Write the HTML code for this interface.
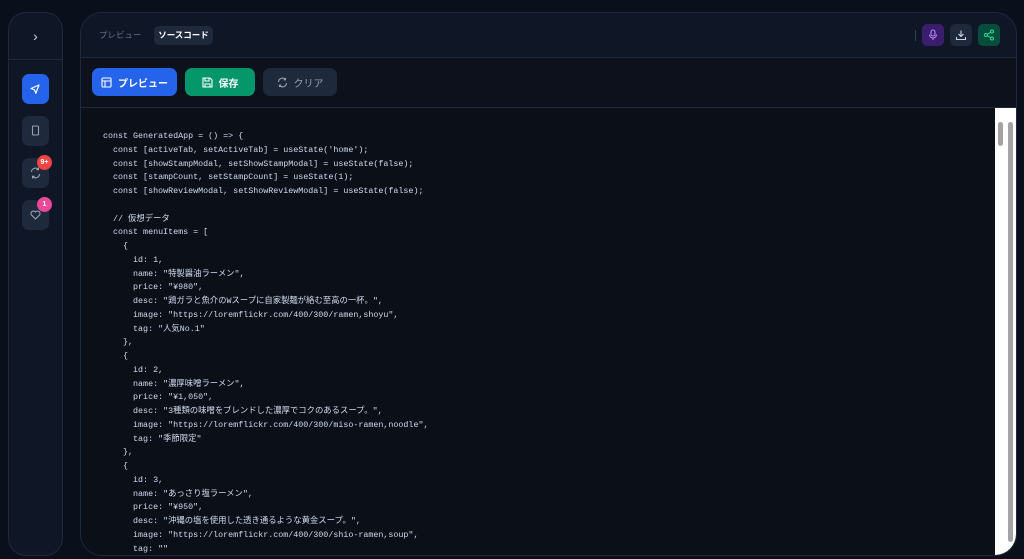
<!DOCTYPE html>
<html><head><meta charset="utf-8"><style>
*{box-sizing:border-box;margin:0;padding:0}
body{width:1024px;height:559px;background:#0a0f1c;font-family:"Liberation Sans","Noto Sans CJK JP",sans-serif;overflow:hidden;position:relative}
.side{position:absolute;left:8px;top:12px;width:55px;height:544px;border-radius:18px;background:#0f1626;border:1px solid #1e293b}
.side .top{height:47px;border-bottom:1px solid #1e293b;color:#cbd5e1;text-align:center;line-height:46px;font-size:14px}
.sb{position:absolute;left:13px;width:27px;height:30px;border-radius:7px;background:#1e293b}
.badge{position:absolute;width:15px;height:15px;border-radius:50%;color:#fff;font-size:7px;font-weight:bold;text-align:center;line-height:15px}
.main{position:absolute;left:80px;top:12px;width:937px;height:544px;border-radius:22px;background:#0f1626;border:1px solid #1e293b;overflow:hidden}
.hdr{height:45px;border-bottom:1px solid #1e293b;position:relative}
.tab{position:absolute;top:13px;font-size:8.5px;height:19px;line-height:19px;padding:0 10px;border-radius:5px}
.tb{position:absolute;top:0;height:50px;left:0;right:0;background:#0c111b;border-bottom:1px solid #1e293b}
.btn{position:absolute;top:10px;height:28px;border-radius:7px;color:#fff;font-size:10px;font-weight:bold;display:flex;align-items:center;justify-content:center;gap:6px}
.ib{position:absolute;top:11px;width:22px;height:22px;border-radius:5px;display:flex;align-items:center;justify-content:center}
.code{position:absolute;top:96px;left:0;right:0;bottom:0;background:#0b0f18}
pre{position:absolute;left:22px;top:22px;font-family:"Liberation Mono","Noto Sans CJK JP",monospace;font-size:8.35px;line-height:13.75px;color:#d0dcef}
.scr{position:absolute;left:914px;top:0;width:22px;bottom:0;background:#fff;border-bottom-right-radius:20px}
</style></head><body>
<div class="side"><div class="top">›</div>
<div class="sb" style="top:61px;background:#2563eb"><svg width="27" height="30" viewBox="0 0 27 30"><path d="M17 11l-8 3.5 3.5 1.3 1.3 3.5z" fill="none" stroke="#fff" stroke-width="1.2" stroke-linejoin="round"/></svg></div>
<div class="sb" style="top:103px"><svg width="27" height="30"><rect x="10.5" y="10" width="6" height="9" rx="1" fill="none" stroke="#94a3b8" stroke-width="1.1"/></svg></div>
<div class="sb" style="top:145px"><svg width="27" height="30"><path d="M9.5 14a4 4 0 0 1 7-2.5M17.5 16a4 4 0 0 1-7 2.5M16.5 9.5v2.2h-2.2M10.5 20.5v-2.2h2.2" fill="none" stroke="#94a3b8" stroke-width="1.1"/></svg></div>
<div class="badge" style="left:28px;top:142px;background:#ef4444">9+</div>
<div class="sb" style="top:187px"><svg width="27" height="30"><path d="M13.5 19l-4-4a2.2 2.2 0 0 1 4-3 2.2 2.2 0 0 1 4 3z" fill="none" stroke="#94a3b8" stroke-width="1.1"/></svg></div>
<div class="badge" style="left:28px;top:184px;background:#ec4899">1</div>
</div>
<div class="main">
<div class="hdr">
<div class="tab" style="left:18px;color:#64748b;padding:0">プレビュー</div>
<div class="tab" style="left:73px;width:59px;padding:0;text-align:center;background:#1e293b;color:#fff;font-weight:bold">ソースコード</div>
<div style="position:absolute;left:834px;top:17px;width:1px;height:11px;background:#334155"></div>
<div class="ib" style="left:841px;background:#3b1d6e"><svg width="12" height="12" viewBox="0 0 12 12" fill="none" stroke="#c084fc" stroke-width="1.1"><rect x="4" y="1" width="4" height="6" rx="2"/><path d="M2.5 5.5a3.5 3.5 0 0 0 7 0M6 9v2"/></svg></div>
<div class="ib" style="left:869px;background:#1e293b"><svg width="12" height="12" viewBox="0 0 12 12" fill="none" stroke="#cbd5e1" stroke-width="1.1"><path d="M6 1.5v6M3.5 5l2.5 2.5L8.5 5M1.5 8v2.5h9V8"/></svg></div>
<div class="ib" style="left:897px;background:#064e3b"><svg width="12" height="12" viewBox="0 0 12 12" fill="none" stroke="#34d399" stroke-width="1.1"><circle cx="9" cy="2.5" r="1.5"/><circle cx="3" cy="6" r="1.5"/><circle cx="9" cy="9.5" r="1.5"/><path d="M4.3 5.3l3.4-2M4.3 6.7l3.4 2"/></svg></div>
</div>
<div style="position:absolute;top:45px;left:0;right:0;bottom:0">
<div class="tb">
<div class="btn" style="left:11px;width:85px;background:#2563eb"><svg width="11" height="11" fill="none" stroke="#fff" stroke-width="1.1"><rect x="1" y="1" width="9" height="9" rx="1"/><path d="M1 4h9M4 4v6"/></svg>プレビュー</div>
<div class="btn" style="left:104px;width:70px;background:#059669"><svg width="11" height="11" fill="none" stroke="#fff" stroke-width="1.1"><path d="M1 1h7l2 2v7H1z M3 1v3h4V1M3 10V7h5v3"/></svg>保存</div>
<div class="btn" style="left:182px;width:74px;background:#1e293b;color:#94a3b8;font-weight:normal"><svg width="11" height="11" fill="none" stroke="#94a3b8" stroke-width="1.1"><path d="M1.5 5a4 4 0 0 1 7-2.5M9.5 6a4 4 0 0 1-7 2.5M8.5 1v1.8H6.7M2.5 10V8.2h1.8"/></svg>クリア</div>
</div>
<div class="code" style="top:50px">
<pre>const GeneratedApp = () => {
  const [activeTab, setActiveTab] = useState('home');
  const [showStampModal, setShowStampModal] = useState(false);
  const [stampCount, setStampCount] = useState(1);
  const [showReviewModal, setShowReviewModal] = useState(false);

  // 仮想データ
  const menuItems = [
    {
      id: 1,
      name: "特製醤油ラーメン",
      price: "¥980",
      desc: "鶏ガラと魚介のWスープに自家製麺が絡む至高の一杯。",
      image: "https://loremflickr.com/400/300/ramen,shoyu",
      tag: "人気No.1"
    },
    {
      id: 2,
      name: "濃厚味噌ラーメン",
      price: "¥1,050",
      desc: "3種類の味噌をブレンドした濃厚でコクのあるスープ。",
      image: "https://loremflickr.com/400/300/miso-ramen,noodle",
      tag: "季節限定"
    },
    {
      id: 3,
      name: "あっさり塩ラーメン",
      price: "¥950",
      desc: "沖縄の塩を使用した透き通るような黄金スープ。",
      image: "https://loremflickr.com/400/300/shio-ramen,soup",
      tag: ""</pre>
<div class="scr">
<div style="position:absolute;left:3px;top:14px;width:5px;height:24px;border-radius:3px;background:#a3a3a3"></div>
<div style="position:absolute;left:13px;top:14px;width:5px;height:420px;border-radius:3px;background:#a3a3a3"></div>
</div>
</div>
</div>
</div>
</body></html>
